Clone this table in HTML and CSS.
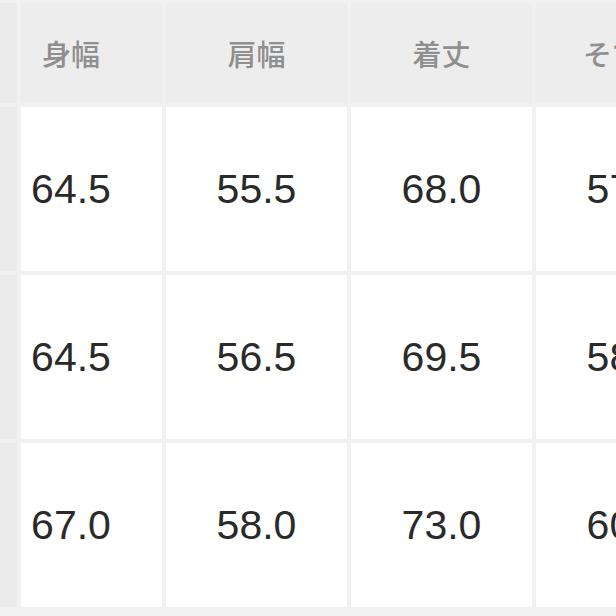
FILE: index.html
```html
<!DOCTYPE html>
<html lang="ja">
<head>
<meta charset="utf-8">
<link rel="stylesheet" href="styles.css">
</head>
<body>
<div class="table">
  <div class="cell side head"></div>
  <div class="cell head first">身幅</div>
  <div class="cell head">肩幅</div>
  <div class="cell head">着丈</div>
  <div class="cell head">そで丈</div>

  <div class="cell side"></div>
  <div class="cell num first">64.5</div>
  <div class="cell num">55.5</div>
  <div class="cell num">68.0</div>
  <div class="cell num">57.0</div>

  <div class="cell side"></div>
  <div class="cell num first">64.5</div>
  <div class="cell num">56.5</div>
  <div class="cell num">69.5</div>
  <div class="cell num">58.0</div>

  <div class="cell side"></div>
  <div class="cell num first">67.0</div>
  <div class="cell num">58.0</div>
  <div class="cell num">73.0</div>
  <div class="cell num">60.0</div>
</div>
</body>
</html>
```
FILE: styles.css
```css
html, body {
  margin: 0;
  padding: 0;
  background: #f1f1f1;
  overflow: hidden;
  width: 616px;
  height: 616px;
}

.table {
  display: grid;
  grid-template-columns: 17px 141px 181px 181px 181px;
  grid-template-rows: 100px 164px 164px 164px;
  gap: 4px;
  padding-top: 3px;
  width: max-content;
}

.cell {
  display: flex;
  align-items: center;
  justify-content: center;
  background: #ffffff;
}

.cell.side {
  background: #ebebeb;
}

.cell.head {
  background: #ededed;
  color: #8f8f8f;
  font-family: "Noto Sans CJK JP", "Noto Sans", sans-serif;
  font-size: 29px;
  font-weight: 500;
}

.cell.side.head {
  background: #ebebeb;
}

.cell.num {
  color: #2a2a2a;
  font-family: "Liberation Sans", Arial, sans-serif;
  font-size: 41px;
}

.cell.first {
  padding-right: 41px;
}
```
